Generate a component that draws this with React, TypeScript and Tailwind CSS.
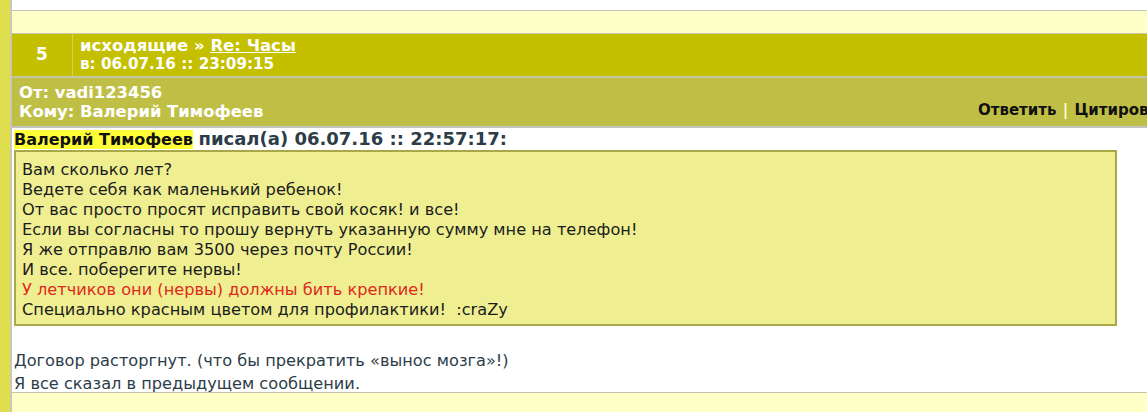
import React from "react";

const font = { fontFamily: "Verdana, 'DejaVu Sans', sans-serif" };

export default function App() {
  return (
    <div
      className="flex h-[412px] w-[1147px] overflow-hidden bg-white"
      style={font}
    >
      {/* left rail */}
      <div className="w-[10px] shrink-0 bg-[#dede4e]" />
      <div className="w-[2px] shrink-0 bg-[#c9c9b4]" />

      <div className="flex min-w-0 flex-1 flex-col">
        <div className="h-[10px] bg-white" />
        <div className="h-[23px] border-t border-[#c4c4bc] bg-[#ffffc8]" />

        {/* message header */}
        <div className="flex h-[43px] border-t border-[#c8c8a8] bg-[#c4c000] text-white">
          <div className="flex w-[61px] shrink-0 items-center justify-center border-r border-[#d2cf5a] text-[17px] font-bold">
            5
          </div>
          <div className="flex flex-col justify-center pl-[7px] font-bold leading-[19px]">
            <p className="text-[16.5px]">
              исходящие » <span className="underline">Re: Часы</span>
            </p>
            <p className="text-[15.2px]">в: 06.07.16 :: 23:09:15</p>
          </div>
        </div>

        <div className="flex h-[50px] items-center border-t-2 border-[#c6c6a6] bg-[#bfbf45] font-bold">
          <div className="flex-1 pl-[7px] text-[16.4px] leading-[19px] text-white">
            <p>От: vadi123456</p>
            <p>Кому: Валерий Тимофеев</p>
          </div>
          <div className="mt-[17px] w-[169px] shrink-0 overflow-hidden whitespace-nowrap text-[15px] text-[#111]">
            Ответить <span className="mx-[1px] text-[#fffbd0]">|</span> Цитировать
          </div>
        </div>

        {/* body */}
        <div className="flex h-[266px] flex-col border-t-2 border-[#c3c3bf] bg-white pl-[2px] pr-[30px] pt-[1px]">
          <p className="whitespace-nowrap font-bold leading-[20px] text-[#2c3d48]">
            <span className="bg-[#ffff38] text-[16px] text-[#111]">Валерий Тимофеев</span>{" "}
            <span className="text-[18px]">писал(а) 06.07.16 :: 22:57:17:</span>
          </p>
          <div className="border-2 border-[#a8a848] bg-[#efef91] px-[6px] pt-[8px] pb-[4px] text-[16.2px] leading-[20px] text-[#1c1c1c]">
            <p>Вам сколько лет?</p>
            <p>Ведете себя как маленький ребенок!</p>
            <p>От вас просто просят исправить свой косяк! и все!</p>
            <p>Если вы согласны то прошу вернуть указанную сумму мне на телефон!</p>
            <p>Я же отправлю вам 3500 через почту России!</p>
            <p>И все. поберегите нервы!</p>
            <p className="text-[#e0281c]">У летчиков они (нервы) должны бить крепкие!</p>
            <p>Специально красным цветом для профилактики!&nbsp;&nbsp;:craZy</p>
          </div>
          <div className="mt-[23px] text-[16.2px] leading-[23px] text-[#2c3d48]">
            <p>Договор расторгнут. (что бы прекратить «вынос мозга»!)</p>
            <p>Я все сказал в предыдущем сообщении.</p>
          </div>
        </div>

        <div className="flex-1 border-t border-[#c4c4b0] bg-[#ffffc8]" />
      </div>
    </div>
  );
}
